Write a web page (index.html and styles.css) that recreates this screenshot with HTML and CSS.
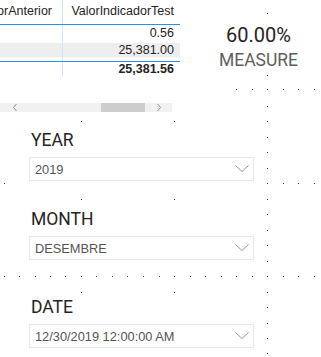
FILE: index.html
```html
<!DOCTYPE html>
<html>
<head>
<meta charset="utf-8">
<link rel="stylesheet" href="styles.css">
</head>
<body>
<svg class="grid" width="321" height="357" viewBox="0 0 321 357">
  <g fill="#3a3a3a">
    <rect x="267" y="13" width="1" height="1"/><rect x="267" y="75" width="1" height="1"/>
    <rect x="236" y="89" width="1" height="1"/><rect x="252" y="89" width="1" height="1"/><rect x="267" y="89" width="1" height="1"/><rect x="283" y="89" width="1" height="1"/><rect x="298" y="89" width="1" height="1"/><rect x="314" y="89" width="1" height="1"/>
    <rect x="267" y="106" width="1" height="1"/><rect x="267" y="121" width="1" height="1"/><rect x="267" y="137" width="1" height="1"/><rect x="267" y="152" width="1" height="1"/><rect x="267" y="168" width="1" height="1"/>
    <rect x="81" y="121" width="1" height="1"/><rect x="174" y="121" width="1" height="1"/>
    <rect x="4" y="183" width="1" height="1"/><rect x="267" y="183" width="1" height="1"/><rect x="283" y="183" width="1" height="1"/><rect x="298" y="183" width="1" height="1"/><rect x="314" y="183" width="1" height="1"/>
    <rect x="81" y="199" width="1" height="1"/><rect x="174" y="199" width="1" height="1"/><rect x="267" y="199" width="1" height="1"/>
    <rect x="267" y="214" width="1" height="1"/><rect x="267" y="230" width="1" height="1"/><rect x="267" y="245" width="1" height="1"/><rect x="267" y="261" width="1" height="1"/>
    <rect x="4" y="276" width="1" height="1"/><rect x="19" y="276" width="1" height="1"/><rect x="35" y="276" width="1" height="1"/><rect x="50" y="276" width="1" height="1"/><rect x="65" y="276" width="1" height="1"/><rect x="81" y="276" width="1" height="1"/><rect x="96" y="276" width="1" height="1"/><rect x="112" y="276" width="1" height="1"/><rect x="127" y="276" width="1" height="1"/><rect x="143" y="276" width="1" height="1"/><rect x="159" y="276" width="1" height="1"/><rect x="174" y="276" width="1" height="1"/><rect x="190" y="276" width="1" height="1"/><rect x="205" y="276" width="1" height="1"/><rect x="221" y="276" width="1" height="1"/><rect x="236" y="276" width="1" height="1"/><rect x="252" y="276" width="1" height="1"/><rect x="267" y="276" width="1" height="1"/><rect x="283" y="276" width="1" height="1"/><rect x="298" y="276" width="1" height="1"/><rect x="314" y="276" width="1" height="1"/>
    <rect x="81" y="292" width="1" height="1"/><rect x="174" y="292" width="1" height="1"/><rect x="267" y="292" width="1" height="1"/>
    <rect x="267" y="307" width="1" height="1"/><rect x="267" y="323" width="1" height="1"/><rect x="267" y="338" width="1" height="1"/><rect x="267" y="353" width="1" height="1"/>
  </g>
</svg>
<div class="page">
  <div class="top">
    <div class="tablevis">
      <div class="tbl">
        <div class="row head">
          <div class="c1"><span>ValorAnterior</span></div>
          <div class="c2">ValorIndicadorTest</div>
        </div>
        <div class="row r1">
          <div class="c1"></div>
          <div class="c2">0.56</div>
        </div>
        <div class="row r2">
          <div class="c1"></div>
          <div class="c2">25,381.00</div>
        </div>
        <div class="row total">
          <div class="c1"></div>
          <div class="c2">25,381.56</div>
        </div>
      </div>
      <div class="hscroll">
        <svg class="arrow" width="6" height="9" viewBox="0 0 6 9"><polyline points="4.5,1 1.5,4.5 4.5,8" fill="none" stroke="#8a8a8a" stroke-width="1"/></svg>
        <div class="track"><div class="thumb"></div></div>
        <svg class="arrow" width="6" height="9" viewBox="0 0 6 9"><polyline points="1.5,1 4.5,4.5 1.5,8" fill="none" stroke="#8a8a8a" stroke-width="1"/></svg>
      </div>
    </div>
    <div class="card">
      <div class="value">60.00%</div>
      <div class="label">MEASURE</div>
    </div>
  </div>
  <div class="slicers">
    <div class="slicer year">
      <div class="slabel">YEAR</div>
      <div class="dd"><span>2019</span><svg class="chev" width="14" height="8" viewBox="0 0 14 8"><polyline points="0.5,0.5 7,6.5 13.5,0.5" fill="none" stroke="#8796a8" stroke-width="1"/></svg></div>
    </div>
    <div class="slicer month">
      <div class="slabel">MONTH</div>
      <div class="dd"><span>DESEMBRE</span><svg class="chev" width="14" height="8" viewBox="0 0 14 8"><polyline points="0.5,0.5 7,6.5 13.5,0.5" fill="none" stroke="#8796a8" stroke-width="1"/></svg></div>
    </div>
    <div class="slicer date">
      <div class="slabel">DATE</div>
      <div class="dd"><span>12/30/2019 12:00:00 AM</span><svg class="chev" width="14" height="8" viewBox="0 0 14 8"><polyline points="0.5,0.5 7,6.5 13.5,0.5" fill="none" stroke="#8796a8" stroke-width="1"/></svg></div>
    </div>
  </div>
</div>
</body>
</html>
```
FILE: styles.css
```css
html, body {
  margin: 0;
  padding: 0;
  background: #ffffff;
}
body {
  width: 321px;
  height: 357px;
  overflow: hidden;
  position: relative;
  font-family: Roboto, "Liberation Sans", sans-serif;
  color: #252423;
}
.grid {
  position: absolute;
  left: 0;
  top: 0;
  display: block;
}
.page {
  position: relative;
}
.top {
  display: flex;
  height: 112px;
}
.tablevis {
  width: 180px;
  display: flex;
  flex-direction: column;
}
.tbl {
  width: 180px;
  font-family: "Liberation Sans", Arial, sans-serif;
}
.row {
  display: flex;
}
.c1 {
  width: 63px;
  border-right: 1px solid #d6e4f2;
  display: flex;
  justify-content: flex-end;
  overflow: hidden;
  white-space: nowrap;
  padding-right: 10px;
  box-sizing: border-box;
}
.c2 {
  flex: 1;
  text-align: right;
  padding-right: 6px;
  white-space: nowrap;
  font-size: 12.5px;
  line-height: 15px;
}
.head {
  border-bottom: 1px solid #2b8fe3;
  font-size: 12.5px;
  line-height: 16px;
}
.head .c1, .head .c2 {
  font-size: 12.5px;
  line-height: 16px;
  padding-top: 3px;
  padding-bottom: 5px;
}
.r1 .c2 {
  padding-top: 1px;
  padding-bottom: 2px;
}
.r1 .c1 {
  height: 18px;
}
.r2 {
  height: 18px;
  background: linear-gradient(#eeeeee, #eeeeee) no-repeat 0 0 / 100% 14px;
}
.total {
  border-top: 1px solid #2b8fe3;
  font-weight: bold;
}
.total .c1, .total .c2 {
  height: 15px;
}
.hscroll {
  margin-top: 26px;
  width: 172px;
  height: 9px;
  background: #f1f1f1;
  display: flex;
  align-items: center;
}
.arrow {
  display: block;
  margin: 0 10px 0 12px;
}
.hscroll .arrow:last-child {
  margin: 0 10px 0 10px;
}
.track {
  flex: 1;
  height: 9px;
  position: relative;
}
.thumb {
  position: absolute;
  left: 73px;
  top: 0;
  width: 44px;
  height: 9px;
  background: #cdcdcd;
}
.card {
  flex: 1;
  margin-left: 16px;
  display: flex;
  flex-direction: column;
  align-items: center;
  padding-top: 24px;
}
.value {
  font-size: 20px;
  line-height: 22px;
  color: #252423;
}
.label {
  margin-top: 4px;
  font-size: 17.5px;
  line-height: 20px;
  color: #605e5c;
}
.slicers {
  padding-left: 29px;
  width: 225px;
  padding-top: 18px;
}
.slabel {
  font-size: 17.5px;
  line-height: 20px;
  padding-left: 2px;
  color: #252423;
}
.dd {
  margin-top: 7px;
  height: 24px;
  box-sizing: border-box;
  border: 1px solid #e8e8e8;
  display: flex;
  align-items: center;
  justify-content: space-between;
  padding: 0 4px 0 5px;
  font-family: "Liberation Sans", Arial, sans-serif;
  font-size: 12.8px;
  color: #555555;
}
.chev {
  display: block;
}
.month {
  margin-top: 28px;
}
.date {
  margin-top: 37px;
}
```
